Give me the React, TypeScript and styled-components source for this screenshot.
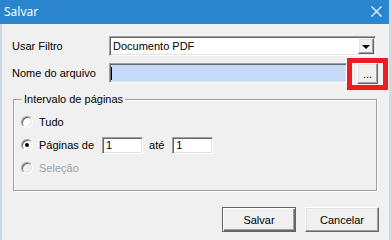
import React from "react";
import styled, { createGlobalStyle } from "styled-components";

const Global = createGlobalStyle`
  html, body { margin: 0; padding: 0; background: #f0f0f0; }
  body { width: 392px; height: 240px; overflow: hidden; }
  * { box-sizing: border-box; }
`;

const Window = styled.div`
  width: 392px;
  height: 240px;
  border-right: 3px solid #d3d8df;
  display: flex;
  flex-direction: column;
  font-family: "Liberation Sans", Arial, sans-serif;
  font-size: 11px;
  color: #000;
  background: #f0f0f0;
`;

const TitleBar = styled.div`
  height: 24px;
  flex: none;
  background: #2b85cc;
  display: flex;
  align-items: center;
  justify-content: space-between;
  padding: 0 7px 1px 4px;
  color: #fff;
  font-family: "Noto Sans", "Open Sans", sans-serif;
  font-size: 12px;
`;

const Body = styled.div`
  flex: 1;
  display: flex;
  flex-direction: column;
  border-left: 2px solid #c9d6e7;
  padding: 12px 12px 0 10px;
`;

const FormGrid = styled.div`
  display: grid;
  grid-template-columns: 97px 1fr;
  row-gap: 7px;
  align-items: center;
`;

const Label = styled.span`
  line-height: 13px;
`;

const sunken = `
  border: 1px solid;
  border-color: #a0a0a0 #ffffff #ffffff #a0a0a0;
  box-shadow: inset 1px 1px 0 #696969, inset -1px -1px 0 #e3e3e3;
  padding: 1px;
`;

const raised = `
  border: 1px solid;
  border-color: #ffffff #696969 #696969 #ffffff;
  box-shadow: inset -1px -1px 0 #a0a0a0, inset 1px 1px 0 #e3e3e3;
  background: #f0f0f0;
`;

const Combo = styled.div`
  ${sunken}
  height: 20px;
  margin-right: 1px;
  background: #fff;
  display: flex;
  align-items: center;
  padding-left: 3px;
`;

const ComboText = styled.span`
  flex: 1;
  line-height: 13px;
`;

const DropButton = styled.div`
  ${raised}
  width: 16px;
  height: 16px;
  display: flex;
  align-items: center;
  justify-content: center;
`;

const Triangle = styled.span`
  width: 0;
  height: 0;
  border-left: 4px solid transparent;
  border-right: 4px solid transparent;
  border-top: 4px solid #000;
  margin-top: 1px;
`;

const FileRow = styled.div`
  display: flex;
  align-items: flex-start;
  gap: 10px;
`;

const FileField = styled.div<{ $highlight?: boolean }>`
  ${sunken}
  flex: 1;
  height: 20px;
  background: ${(p) => (p.$highlight ? "#c6dafc" : "#fff")};
  display: flex;
  align-items: center;
  padding-left: 1px;
`;

const Caret = styled.span`
  width: 1px;
  height: 13px;
  background: #000;
`;

const BrowseWrap = styled.div`
  position: relative;
  width: 21px;
  height: 21px;
  margin-right: -1px;
`;

const SmallButton = styled.button`
  ${raised}
  width: 21px;
  height: 21px;
  padding: 0 0 3px 0;
  margin: 0;
  font: inherit;
  font-size: 11px;
  line-height: 11px;
  color: #000;
  display: flex;
  align-items: flex-end;
  justify-content: center;
`;

const Highlight = styled.div`
  position: absolute;
  left: -10px;
  top: -5px;
  width: 41px;
  height: 32px;
  border: 5px solid #ed1c24;
  pointer-events: none;
`;

const Group = styled.fieldset`
  margin: 9px 0 0 1px;
  padding: 0;
  border: 1px solid #a0a0a0;
  box-shadow: 1px 1px 0 #fff, inset 1px 1px 0 #fff;
  min-width: 0;
`;

const Legend = styled.legend`
  margin-left: 8px;
  padding: 0 2px;
  line-height: 13px;
  background: #f0f0f0;
`;

const GroupBody = styled.div`
  display: flex;
  flex-direction: column;
  gap: 3px;
  padding: 6px 0 12px 7px;
`;

const RadioRow = styled.label<{ $disabled?: boolean }>`
  height: 20px;
  display: flex;
  align-items: center;
  color: ${(p) => (p.$disabled ? "#a0a0a0" : "#000")};
`;

const RadioCircle = styled.span<{ $checked?: boolean; $disabled?: boolean }>`
  width: 12px;
  height: 12px;
  border-radius: 50%;
  border: 1px solid;
  border-color: #a0a0a0 #ffffff #ffffff #a0a0a0;
  box-shadow: inset 1px 1px 0 #696969, inset -1px -1px 0 #e3e3e3;
  background: ${(p) => (p.$disabled ? "#f0f0f0" : "#fff")};
  display: flex;
  align-items: center;
  justify-content: center;
  margin-right: 6px;
  flex: none;
  &::after {
    content: "";
    width: 4px;
    height: 4px;
    border-radius: 50%;
    background: #000;
    display: ${(p) => (p.$checked ? "block" : "none")};
  }
`;

const NumField = styled.div`
  ${sunken}
  width: 41px;
  height: 17px;
  background: #fff;
  display: flex;
  align-items: center;
  padding-left: 3px;
  line-height: 13px;
`;

const Word = styled.span<{ $lead?: number; $gap?: number }>`
  margin-left: ${(p) => p.$lead ?? 0}px;
  margin-right: ${(p) => p.$gap ?? 0}px;
  line-height: 13px;
`;

const Footer = styled.div`
  display: flex;
  justify-content: flex-end;
  gap: 9px;
  margin: 16px -2px 0 0;
`;

const DialogButton = styled.button<{ $default?: boolean }>`
  width: 74px;
  height: 25px;
  margin: 0;
  padding: 0;
  font: inherit;
  font-size: 11px;
  color: #000;
  background: #f0f0f0;
  ${(p) =>
    p.$default
      ? `border: 1px solid #646464;
         box-shadow: inset 1px 1px 0 #fff, inset -1px -1px 0 #696969, inset -2px -2px 0 #a0a0a0;`
      : `border: 1px solid;
         border-color: #ffffff #696969 #696969 #ffffff;
         box-shadow: inset -1px -1px 0 #a0a0a0, inset 1px 1px 0 #e3e3e3;`}
`;

const CloseIcon = () => (
  <svg width="11" height="11" viewBox="0 0 11 11">
    <path d="M0.5 0.5 L10.5 10.5 M10.5 0.5 L0.5 10.5" stroke="#fff" strokeWidth="1.1" />
  </svg>
);

export default function App() {
  return (
    <>
      <Global />
      <Window>
        <TitleBar>
          <span>Salvar</span>
          <CloseIcon />
        </TitleBar>
        <Body>
          <FormGrid>
            <Label>Usar Filtro</Label>
            <Combo>
              <ComboText>Documento PDF</ComboText>
              <DropButton>
                <Triangle />
              </DropButton>
            </Combo>
            <Label>Nome do arquivo</Label>
            <FileRow>
              <FileField $highlight>
                <Caret />
              </FileField>
              <BrowseWrap>
                <SmallButton>...</SmallButton>
                <Highlight />
              </BrowseWrap>
            </FileRow>
          </FormGrid>
          <Group>
            <Legend>Intervalo de páginas</Legend>
            <GroupBody>
              <RadioRow>
                <RadioCircle />
                Tudo
              </RadioRow>
              <RadioRow>
                <RadioCircle $checked />
                <Word $gap={8}>Páginas de</Word>
                <NumField>1</NumField>
                <Word $lead={6} $gap={8}>
                  até
                </Word>
                <NumField>1</NumField>
              </RadioRow>
              <RadioRow $disabled>
                <RadioCircle $disabled />
                Seleção
              </RadioRow>
            </GroupBody>
          </Group>
          <Footer>
            <DialogButton $default>Salvar</DialogButton>
            <DialogButton>Cancelar</DialogButton>
          </Footer>
        </Body>
      </Window>
    </>
  );
}
